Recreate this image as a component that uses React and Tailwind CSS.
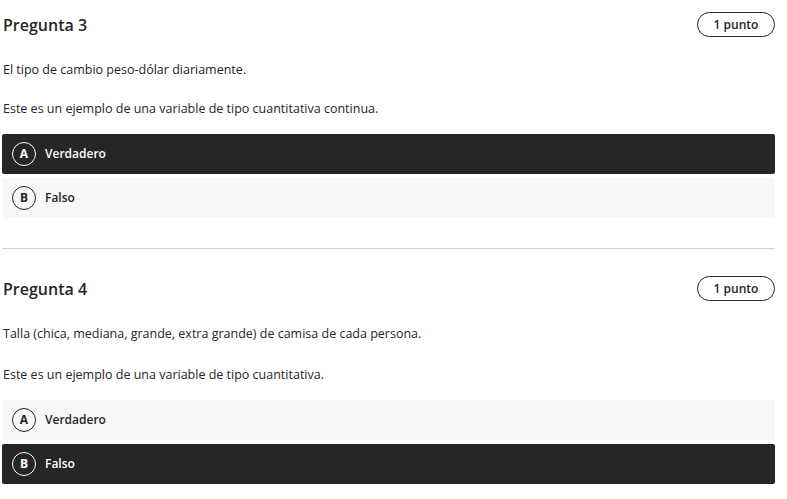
import React from "react";

const questions = [
  {
    n: 3,
    stem: "El tipo de cambio peso-dólar diariamente.",
    prompt: "Este es un ejemplo de una variable de tipo cuantitativa continua.",
    selected: "A",
    textGap: "mt-[23px]",
  },
  {
    n: 4,
    stem: "Talla (chica, mediana, grande, extra grande) de camisa de cada persona.",
    prompt: "Este es un ejemplo de una variable de tipo cuantitativa.",
    selected: "B",
    textGap: "mt-[25px]",
  },
];

function Option({ letter, label, active }) {
  return (
    <div
      className={`h-[40px] flex items-center pl-[10px] rounded-[2px] ${
        active ? "bg-[#262626] text-white" : "bg-[#f7f7f7] text-[#262626]"
      }`}
    >
      <span
        className={`w-[24px] h-[24px] rounded-full border flex items-center justify-center text-[12px] font-bold ${
          active ? "border-white" : "border-[#262626]"
        }`}
      >
        {letter}
      </span>
      <span className="ml-[9px] text-[12px] font-semibold">{label}</span>
    </div>
  );
}

function Question({ q }) {
  return (
    <div>
      <div className="flex items-center justify-between h-[25px]">
        <h2 className="text-[16px] font-semibold text-[#262626] pl-[1px]">Pregunta {q.n}</h2>
        <span className="h-[25px] w-[78px] rounded-full border border-[#262626] flex items-center justify-center text-[12px] font-semibold text-[#262626]">
          1 punto
        </span>
      </div>
      <p className="mt-[25px] text-[12.5px] leading-[16px] text-[#262626] pl-[1px]">{q.stem}</p>
      <p className={`${q.textGap} text-[12.5px] leading-[16px] text-[#262626] pl-[1px]`}>{q.prompt}</p>
      <div className="mt-[17px] flex flex-col gap-[4px]">
        <Option letter="A" label="Verdadero" active={q.selected === "A"} />
        <Option letter="B" label="Falso" active={q.selected === "B"} />
      </div>
    </div>
  );
}

export default function App() {
  return (
    <div
      className="bg-white w-[787px] h-[499px] overflow-hidden"
      style={{ fontFamily: '"Open Sans", "Noto Sans", sans-serif' }}
    >
      <div className="ml-[2px] w-[773px] pt-[12px]">
        <Question q={questions[0]} />
        <div className="mt-[30px] h-px bg-[#d2d2d2]" />
        <div className="mt-[27px]">
          <Question q={questions[1]} />
        </div>
      </div>
    </div>
  );
}
